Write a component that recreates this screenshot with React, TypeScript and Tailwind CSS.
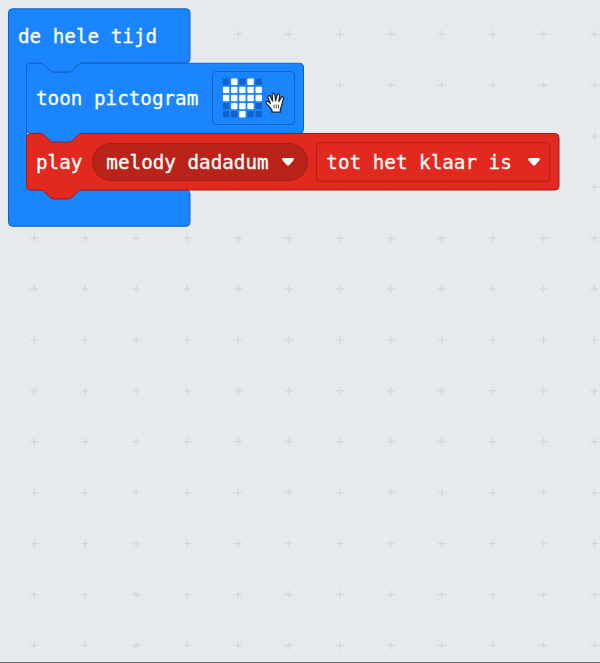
import React from "react";

const steps = Array.from({ length: 13 }, (_, i) => 34.3 + i * 50.93);
const heart = ["01010", "11111", "11111", "01110", "00100"];

function Grid() {
  return (
    <svg className="absolute inset-0" width="600" height="663" stroke="#d5d9dc" strokeWidth="1.4">
      {steps.map((y) =>
        steps.map((x) => <path key={`${x}-${y}`} d={`M${x - 4} ${y}h8M${x} ${y - 4}v8`} />)
      )}
    </svg>
  );
}

function Shape({ d, fill, stroke, width, height }: { d: string; fill: string; stroke: string; width: number; height: number }) {
  return (
    <svg className="absolute top-0 left-0 overflow-visible" width={width} height={height}>
      <path d={d} fill={fill} stroke={stroke} strokeWidth="1" />
    </svg>
  );
}

function Label({ children }: { children: React.ReactNode }) {
  return <span className="relative top-px whitespace-pre leading-6 [-webkit-text-stroke:0.3px_white]">{children}</span>;
}

function Arrow() {
  return (
    <svg className="shrink-0" width="12" height="8" viewBox="0 0 12 8">
      <path d="M1.8 0h8.4c1.7 0 2.2 1.4 1.1 2.5L7.3 6.9Q6 8.1 4.7 6.9L.7 2.5C-.4 1.4.1 0 1.8 0Z" fill="white" />
    </svg>
  );
}

function Heart() {
  return (
    <svg width="41" height="40">
      {heart.join("").split("").map((on, i) => (
        <rect key={i} x={0.9 + (i % 5) * 8.15} y={0.6 + Math.floor(i / 5) * 8.1} width="6.4" height="6.4" rx="1" fill={on === "1" ? "white" : "#1263c9"} />
      ))}
    </svg>
  );
}

function Hand() {
  return (
    <svg className="absolute left-[52px] top-[20px]" width="22" height="22" viewBox="0 0 22 22">
      <path
        d="M7 20.2V18L4.3 14.7 1.2 11.2C.3 9.7 2 8.5 3.4 9.8L5.4 11.6 3 5.4C2.5 3.7 4.7 3 5.4 4.6L7.6 9.2 7.2 2.8C7.2 1 9.5.8 9.8 2.6L10.6 8.8 12.2 3C12.7 1.3 14.9 1.9 14.6 3.7L13.8 9.7 16.2 5.5C17.2 4 19.1 5 18.4 6.8L17.2 11.2C16.8 14.3 16.2 15.7 15.3 17.1V20.2Z"
        fill="white" stroke="#202020" strokeWidth="1.2" strokeLinejoin="round"
      />
      <path d="M9 12.5v4M11.2 12.5v4M13.4 12.5v4" stroke="#202020" strokeWidth="0.8" />
    </svg>
  );
}

export default function App() {
  return (
    <main className="relative h-[663px] w-[600px] overflow-hidden border-b border-[#666a6c] bg-[#e6eaed] pl-2 pt-2 text-[19.25px] text-white [font-family:'DejaVu_Sans_Mono',monospace]">
      <Grid />
      <section className="relative h-[219px] w-[552px]">
        <Shape
          width={552} height={219} fill="#1a85ff" stroke="#1262be"
          d="M4.5 .8H178Q182 .8 182 4.8V51Q182 55 178 55H74Q71.5 55.3 70 56.8L64.5 62.3Q62.5 64.2 60 64.2H46Q43.5 64.2 41.5 62.3L36 56.8Q34.5 55.3 32 55.3H22.5Q18.5 55.3 18.5 59.3V178Q18.5 182 22.5 182H178Q182 182 182 186V214.3Q182 218.3 178 218.3H4.5Q.5 218.3 .5 214.3V4.8Q.5 .8 4.5 .8Z"
        />
        <header className="relative flex h-[55px] items-center pl-[10px]">
          <Label>de hele tijd</Label>
        </header>
        <div className="flex flex-col pl-[18px]">
          <div className="relative flex h-[70px] w-[278px] items-center pl-[10px]">
            <Shape
              width={278} height={70} fill="#1a85ff" stroke="#1262be"
              d="M4.5 .3H14Q16.5 .3 18 1.8L23.5 7.3Q25.5 9.2 28 9.2H42Q44.5 9.2 46.5 7.3L52 1.8Q53.5 .3 56 .3H273.5Q277.5 .3 277.5 4.3V66.3Q277.5 70.3 273.5 70.3H4.5Q.5 70.3 .5 66.3V4.3Q.5 .3 4.5 .3Z"
            />
            <svg className="absolute left-0 top-[68px]" width="80" height="14">
              <path d="M14 2 25 12H45L56 2V0H14Z" fill="#1a85ff" />
            </svg>
            <div className="relative flex w-full items-center">
              <Label>toon pictogram</Label>
              <div className="relative ml-[14px] flex h-[54px] w-[83px] items-center rounded-[4px] border border-[#1262be] pl-[9px]">
                <Heart />
                <Hand />
              </div>
            </div>
          </div>
          <div className="relative flex h-[57px] w-[534px] items-center pl-[10px]">
            <Shape
              width={534} height={57} fill="#e1291f" stroke="#a31b17"
              d="M4.5 .5H14Q16.5 .5 18 2L23.5 7.4Q25.5 9.2 28 9.2H42Q44.5 9.2 46.5 7.4L52 2Q53.5 .5 56 .5H529Q533 .5 533 4.5V53Q533 57 529 57H56Q53.5 57 52 58.5L46.5 64Q44.5 66 42 66H28Q25.5 66 23.5 64L18 58.5Q16.5 57 14 57H4.5Q.5 57 .5 53V4.5Q.5 .5 4.5 .5Z"
            />
            <div className="relative flex items-center">
              <Label>play</Label>
              <div className="ml-[10px] flex h-[38px] w-[216px] items-center justify-between rounded-full border border-[#a51d17] bg-[#ba2319] pl-[13px] pr-[13px]">
                <Label>melody dadadum</Label>
                <Arrow />
              </div>
              <div className="ml-2 flex h-10 w-[234px] items-center justify-between rounded-[4px] border border-[#b01f19] pl-[9px] pr-[9px]">
                <Label>tot het klaar is</Label>
                <Arrow />
              </div>
            </div>
          </div>
        </div>
      </section>
    </main>
  );
}
